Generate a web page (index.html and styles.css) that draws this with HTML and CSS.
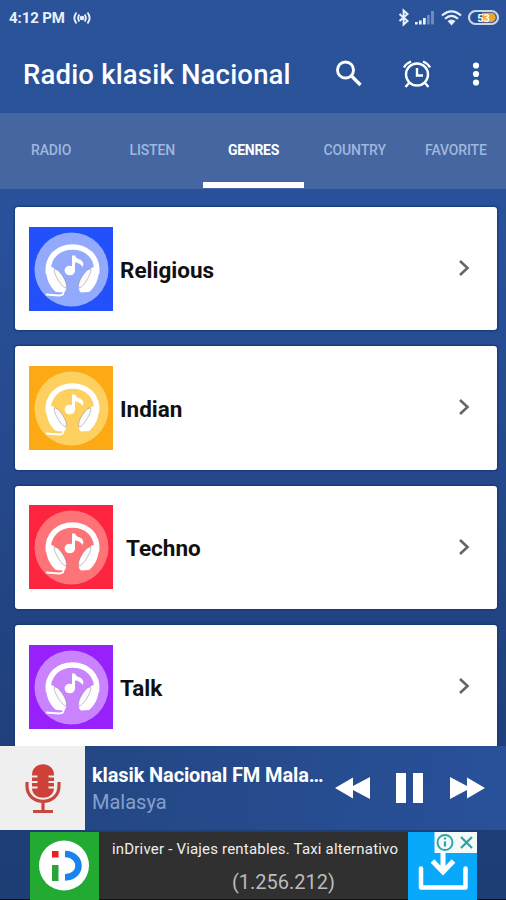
FILE: index.html
```html
<!DOCTYPE html>
<html lang="en">
<head>
<meta charset="utf-8">
<title>Radio klasik Nacional</title>
<link rel="stylesheet" href="styles.css">
</head>
<body>
<svg width="0" height="0" class="defs">
  <symbol id="phones" viewBox="0 0 84 84">
    <circle cx="42.500" cy="42.500" r="37" class="disc"/>
    <path d="M19.500 47C15 11 72 11 67.500 47" fill="none" stroke="#fff" stroke-width="5.500"/>
    <g fill="#fff">
      <path d="M17 38Q16 56 27 65L35 65.500Q39 62 36 56L25 41Z"/>
      <path d="M70 38Q71 56 60 65L52 65.500Q48 62 51 56L62 41Z"/>
    </g>
    <g fill="#fafafa" stroke="#777" stroke-opacity=".55" stroke-width=".8">
      <path d="M25.500 42Q28 41 33 48Q39 57 37 61Q34 61 29 53Q24 44 25.500 42Z"/>
      <path d="M61.500 42Q59 41 54 48Q48 57 50 61Q53 61 58 53Q63 44 61.500 42Z"/>
    </g>
    <path d="M34 64Q36 68.500 30 68.500L17 67.500" fill="none" stroke="#fff" stroke-width="1.900"/>
    <ellipse cx="40.800" cy="43.500" rx="5.200" ry="4.800" fill="#fff"/>
    <path d="M43 43V28.500H46Q47 31.500 51 32.500Q56 35 53.500 40Q51 35.500 46 35.500V44Z" fill="#fff"/>
  </symbol>
</svg>
<div class="screen">
  <div class="status">
    <span class="time">4:12 PM</span>
    <svg class="cast" width="18" height="14" viewBox="0 0 18 14" fill="none" stroke="#e8f0ff" stroke-width="1.900"><circle cx="9" cy="7" r="1.400" fill="#e8f0ff"/><path d="M6.300 3.500Q4 7 6.300 10.500M11.700 3.500Q14 7 11.700 10.500M3.500 1.500Q-.8 7 3.500 12.500M14.500 1.500Q18.800 7 14.500 12.500"/></svg>
    <svg class="sys" width="106" height="20" viewBox="0 0 106 20">
      <path d="M.5 6L8.500 13L4.600 16.500V2.500L8.500 6L.5 13" fill="none" stroke="#e8f0ff" stroke-width="2"/>
      <g fill="#e8f0ff"><path d="M16 14h2.700v2.500H16zM20 12.500h2.700v4H20zM24 10h2.700v6.500H24z"/><path d="M28 7h2.700v9.500H28zM32 3h3v13.500h-3z" opacity=".35"/></g>
      <g fill="none" stroke="#e8f0ff" stroke-width="2.200"><path d="M43 7.500Q52.500-.8 62 7.500M46 10.800Q52.500 5 59 10.800"/></g><path d="M48.500 13Q52.500 9.800 56.500 13L52.500 17.500Z" fill="#e8f0ff"/>
      <rect x="70" y="3" width="29" height="13" rx="6.500" fill="#295296" stroke="#cbd7e8" stroke-width="2.200"/>
      <path d="M83 4.800h9a4.700 4.700 0 0 1 0 9.400h-9z" fill="#eba536"/>
      <text x="84.500" y="13.500" text-anchor="middle" class="battery">53</text>
    </svg>
  </div>
  <header class="appbar">
    <h1>Radio klasik Nacional</h1>
    <svg class="actions" width="160" height="40" viewBox="0 0 160 40" fill="none" stroke="#fff">
      <g stroke-width="2.900"><circle cx="16.500" cy="15" r="8"/><path d="M22 20.500L31.500 30" stroke-width="3.400"/></g>
      <g stroke-width="2.400"><circle cx="88" cy="19.500" r="11"/><path d="M80 28L76.500 32M96 28L99.500 32M75 12.500Q77 8.500 82 6.500M101 12.500Q99 8.500 94 6.500M88 13V20.500H94"/></g>
      <g fill="#fff" stroke="none"><circle cx="147" cy="10.500" r="3.100"/><circle cx="147" cy="19" r="3.100"/><circle cx="147" cy="27.500" r="3.100"/></g>
    </svg>
  </header>
  <nav class="tabs">
    <a>RADIO</a><a>LISTEN</a><a class="active">GENRES</a><a>COUNTRY</a><a>FAVORITE</a>
  </nav>
  <main class="list">
    <section class="card"><svg class="art blue"><use href="#phones"/></svg><span class="name">Religious</span><svg class="chev" viewBox="0 0 12 18"><path d="M2 2L9.500 9L2 16"/></svg></section>
    <section class="card"><svg class="art orange"><use href="#phones"/></svg><span class="name">Indian</span><svg class="chev" viewBox="0 0 12 18"><path d="M2 2L9.500 9L2 16"/></svg></section>
    <section class="card"><svg class="art red"><use href="#phones"/></svg><span class="name indent">Techno</span><svg class="chev" viewBox="0 0 12 18"><path d="M2 2L9.500 9L2 16"/></svg></section>
    <section class="card"><svg class="art purple"><use href="#phones"/></svg><span class="name">Talk</span><svg class="chev" viewBox="0 0 12 18"><path d="M2 2L9.500 9L2 16"/></svg></section>
  </main>
  <section class="player">
    <div class="cover">
      <svg width="36" height="51" viewBox="0 0 36 51"><path d="M7 12C7-2.500 29-2.500 29 12V25C29 38 7 38 7 25Z" fill="#cd4138"/><path d="M6 13.500h6.500M23.500 13.500h6.500M6 19h6.500M23.500 19h6.500M6 24.500h6.500M23.500 24.500h6.500" stroke="#efefef" stroke-width="2"/><path d="M2 19V23C2 43.500 34 43.500 34 23V19M18 38V49M8 48.500H28" fill="none" stroke="#c84840" stroke-width="3.200"/></svg>
    </div>
    <div class="track"><strong>klasik Nacional FM Mala…</strong><span>Malasya</span></div>
    <svg class="controls" width="152" height="36" viewBox="0 0 152 36" fill="#fff"><path d="M0 18L18 7.500V16L35 7V29L18 20V28.500ZM61 3h10v30H61zM78 3h10v30H78zM115 7L132 16V7.500L150 18L132 28.500V20L115 29Z"/></svg>
  </section>
  <footer class="adrow">
    <div class="ad">
      <svg class="brand" width="69" height="68" viewBox="0 0 69 68"><circle cx="34" cy="33.500" r="25" fill="#fff"/><path d="M22 19h6.500v6.500H22z" fill="#ef1c24"/><path d="M22 33h6.500v16H22z" fill="#29a33a"/><path d="M35 22C53 22.500 53 45 35 45.500" fill="none" stroke="#1784ef" stroke-width="6.500"/></svg>
      <div class="copy"><span class="headline">inDriver - Viajes rentables. Taxi alternativo</span><span class="count">(1.256.212)</span></div>
      <svg class="download" width="69" height="68" viewBox="0 0 69 68"><g fill="none" stroke="#fff" stroke-width="4.500"><path d="M13 36.500V55.500H57.500V36.500" stroke-linecap="round" stroke-linejoin="round"/><path d="M35 20V40M24.500 29L35 40L45.500 29" stroke-width="5"/></g><path d="M26.500 0h42.500v21H26.500z" fill="#f4fafa"/><g fill="none" stroke="#27a5ab" stroke-width="1.900"><circle cx="37" cy="10.500" r="7.500"/><path d="M37 9.500v5M37 5.500v2M53 5L64 16M64 5L53 16" stroke-width="2.200"/></g></svg>
    </div>
  </footer>
</div>
</body>
</html>
```
FILE: styles.css
```css
* { box-sizing: border-box; }
body { margin: 0; font-family: Roboto, "Liberation Sans", sans-serif; }
svg { display: block; flex: none; }
.defs { height: 0; }
.screen { width: 506px; height: 900px; overflow: hidden; display: flex; flex-direction: column; background: linear-gradient(#2a5399, #29519a 220px, #203f7b 750px, #1e3d75); }
.status { height: 36px; flex: none; display: flex; align-items: center; padding: 0 7px 0 9px; }
.time { color: #e8f0ff; font-size: 15px; font-weight: 700; letter-spacing: -.1px; }
.cast { margin-left: 8px; }
.sys { margin-left: auto; margin-right: -6px; overflow: visible; }
.battery { font: 700 11px Roboto, sans-serif; fill: #fff; }
.appbar { height: 77px; flex: none; display: flex; align-items: center; padding-left: 23px; }
h1 { margin: 0; width: 306px; color: #fff; font-size: 27.500px; font-weight: 500; letter-spacing: .18px; white-space: nowrap; }
.tabs { height: 76px; flex: none; display: grid; grid-template-columns: repeat(5, 1fr); background: #4566a0; }
.tabs a { display: flex; align-items: center; justify-content: center; color: #a0b7de; font-size: 14px; letter-spacing: -.15px; font-weight: 500; border-bottom: 6px solid transparent; padding: 4px 0 0 1px; }
.tabs .active { color: #fff; border-color: #fff; font-weight: 700; margin: 0 0 1px 1px; letter-spacing: -.3px; padding: 5px 0 0; }
.list { height: 557px; flex: none; overflow: hidden; padding: 18px 9px 0 15px; display: flex; flex-direction: column; gap: 16px; }
.card { height: 123.300px; flex: none; display: flex; align-items: center; background: #fff; border-radius: 3px; box-shadow: 0 0 2px 1px #163970; padding: 0 27px 0 14px; }
.art { width: 84px; height: 84px; }
.disc { fill: var(--disc); }
.blue { background: #2251fb; --disc: #93a9fb; }
.orange { background: #fda913; --disc: #fdd060; }
.red { background: #fd2440; --disc: #fd7377; }
.purple { background: #9820fb; --disc: #c983fc; }
.name { margin-left: 7px; font-size: 22.500px; font-weight: 700; color: #101010; padding-top: 2px; }
.indent { margin-left: 13px; }
.chev { width: 12px; height: 18px; margin: 0 0 1px auto; fill: none; stroke: #666; stroke-width: 2.600; }
.player { height: 84px; flex: none; display: flex; align-items: center; background: linear-gradient(100deg, #22457f, #29519a); }
.cover { width: 85px; height: 84px; display: flex; align-items: center; justify-content: center; background: #efefef; }
.track { width: 250px; padding-left: 7px; display: flex; flex-direction: column; gap: 3px; white-space: nowrap; }
.track strong { color: #fff; font-size: 20px; line-height: 24px; letter-spacing: -.12px; }
.track span { color: #87a0cb; font-size: 20px; line-height: 24px; }
.adrow { height: 70px; flex: none; padding: 2px 29px 0 30px; border-bottom: 1px solid #111; }
.ad { height: 67px; display: flex; background: #303030; }
.brand { background: #22aa32; }
.copy { flex: 1; display: flex; flex-direction: column; white-space: nowrap; padding-top: 7px; }
.headline { padding-left: 13px; color: #eee; font-size: 15px; line-height: 20px; letter-spacing: .19px; }
.count { color: #bbb; font-size: 20px; line-height: 24px; margin-top: 11px; padding-left: 133px; }
.download { background: #08a9fb; }
```
